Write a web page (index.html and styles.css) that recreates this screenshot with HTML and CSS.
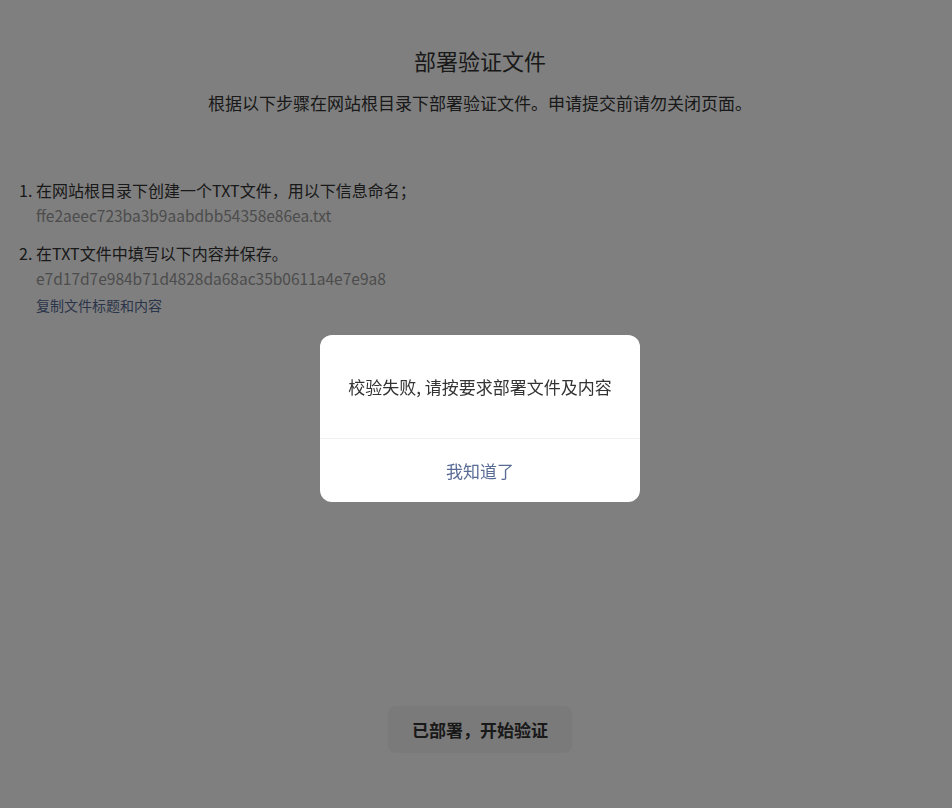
FILE: index.html
```html
<!DOCTYPE html>
<html lang="zh-CN">
<head>
    <meta charset="UTF-8">
    <meta name="viewport" content="width=device-width, initial-scale=1.0">
    <title>部署验证文件</title>
    <link rel="stylesheet" href="styles.css">
</head>
<body>
    <div class="page">
        <header class="intro">
            <h1 class="title">部署验证文件</h1>
            <p class="subtitle">根据以下步骤在网站根目录下部署验证文件。申请提交前请勿关闭页面。</p>
        </header>

        <ol class="steps">
            <li class="step">
                <p class="step-text">在网站根目录下创建一个TXT文件，用以下信息命名；</p>
                <p class="step-value">ffe2aeec723ba3b9aabdbb54358e86ea.txt</p>
            </li>
            <li class="step">
                <p class="step-text">在TXT文件中填写以下内容并保存。</p>
                <p class="step-value">e7d17d7e984b71d4828da68ac35b0611a4e7e9a8</p>
                <a href="#" class="copy-link">复制文件标题和内容</a>
            </li>
        </ol>

        <footer class="actions">
            <button class="verify-btn">已部署，开始验证</button>
        </footer>
    </div>

    <div class="mask">
        <div class="dialog">
            <p class="dialog-msg">校验失败, 请按要求部署文件及内容</p>
            <button class="dialog-btn">我知道了</button>
        </div>
    </div>
</body>
</html>
```

FILE: styles.css
```css
:root {
    --text: #333;
    --text-muted: #999;
    --link: #576b95;
    --btn-bg: #f4f4f4;
}
* {
    margin: 0;
    padding: 0;
    box-sizing: border-box;
}
body {
    font-family: "Noto Sans CJK SC", "Noto Sans", sans-serif;
    color: var(--text);
    background: #fff;
}
.page {
    min-height: 100vh;
    display: flex;
    flex-direction: column;
    padding-left: 8px;
}
.intro {
    text-align: center;
    padding-top: 45px;
}
.title {
    font-size: 22px;
    font-weight: 400;
    line-height: 30px;
}
.subtitle {
    margin-top: 16px;
    font-size: 17px;
    line-height: 24px;
}
.steps {
    margin-top: 63px;
    padding-left: 28px;
    font-size: 16px;
}
.step + .step {
    margin-top: 14px;
}
.step-text {
    line-height: 24px;
}
.step-value {
    margin-top: 1px;
    line-height: 24px;
    font-size: 15.5px;
    color: var(--text-muted);
}
.copy-link {
    display: block;
    margin-top: 5px;
    font-size: 14px;
    line-height: 20px;
    color: var(--link);
    text-decoration: none;
}
.actions {
    margin-top: auto;
    padding-bottom: 55px;
    display: flex;
    justify-content: center;
}
.verify-btn {
    width: 184px;
    height: 47px;
    border: none;
    border-radius: 8px;
    background: var(--btn-bg);
    font-family: inherit;
    font-size: 17px;
    font-weight: 700;
    color: var(--text);
}
.mask {
    position: fixed;
    inset: 0;
    background: rgba(0, 0, 0, 0.5);
    display: flex;
    justify-content: center;
    align-items: flex-start;
    padding: 335px 0 0 8px;
}
.dialog {
    width: 320px;
    background: #fff;
    border-radius: 12px;
    overflow: hidden;
    text-align: center;
}
.dialog-msg {
    padding: 40px 20px 39px;
    font-size: 17px;
    line-height: 24px;
    border-bottom: 1px solid #f0f0f0;
}
.dialog-btn {
    display: block;
    width: 100%;
    height: 63px;
    border: none;
    background: none;
    font-family: inherit;
    font-size: 17px;
    color: var(--link);
}
```
